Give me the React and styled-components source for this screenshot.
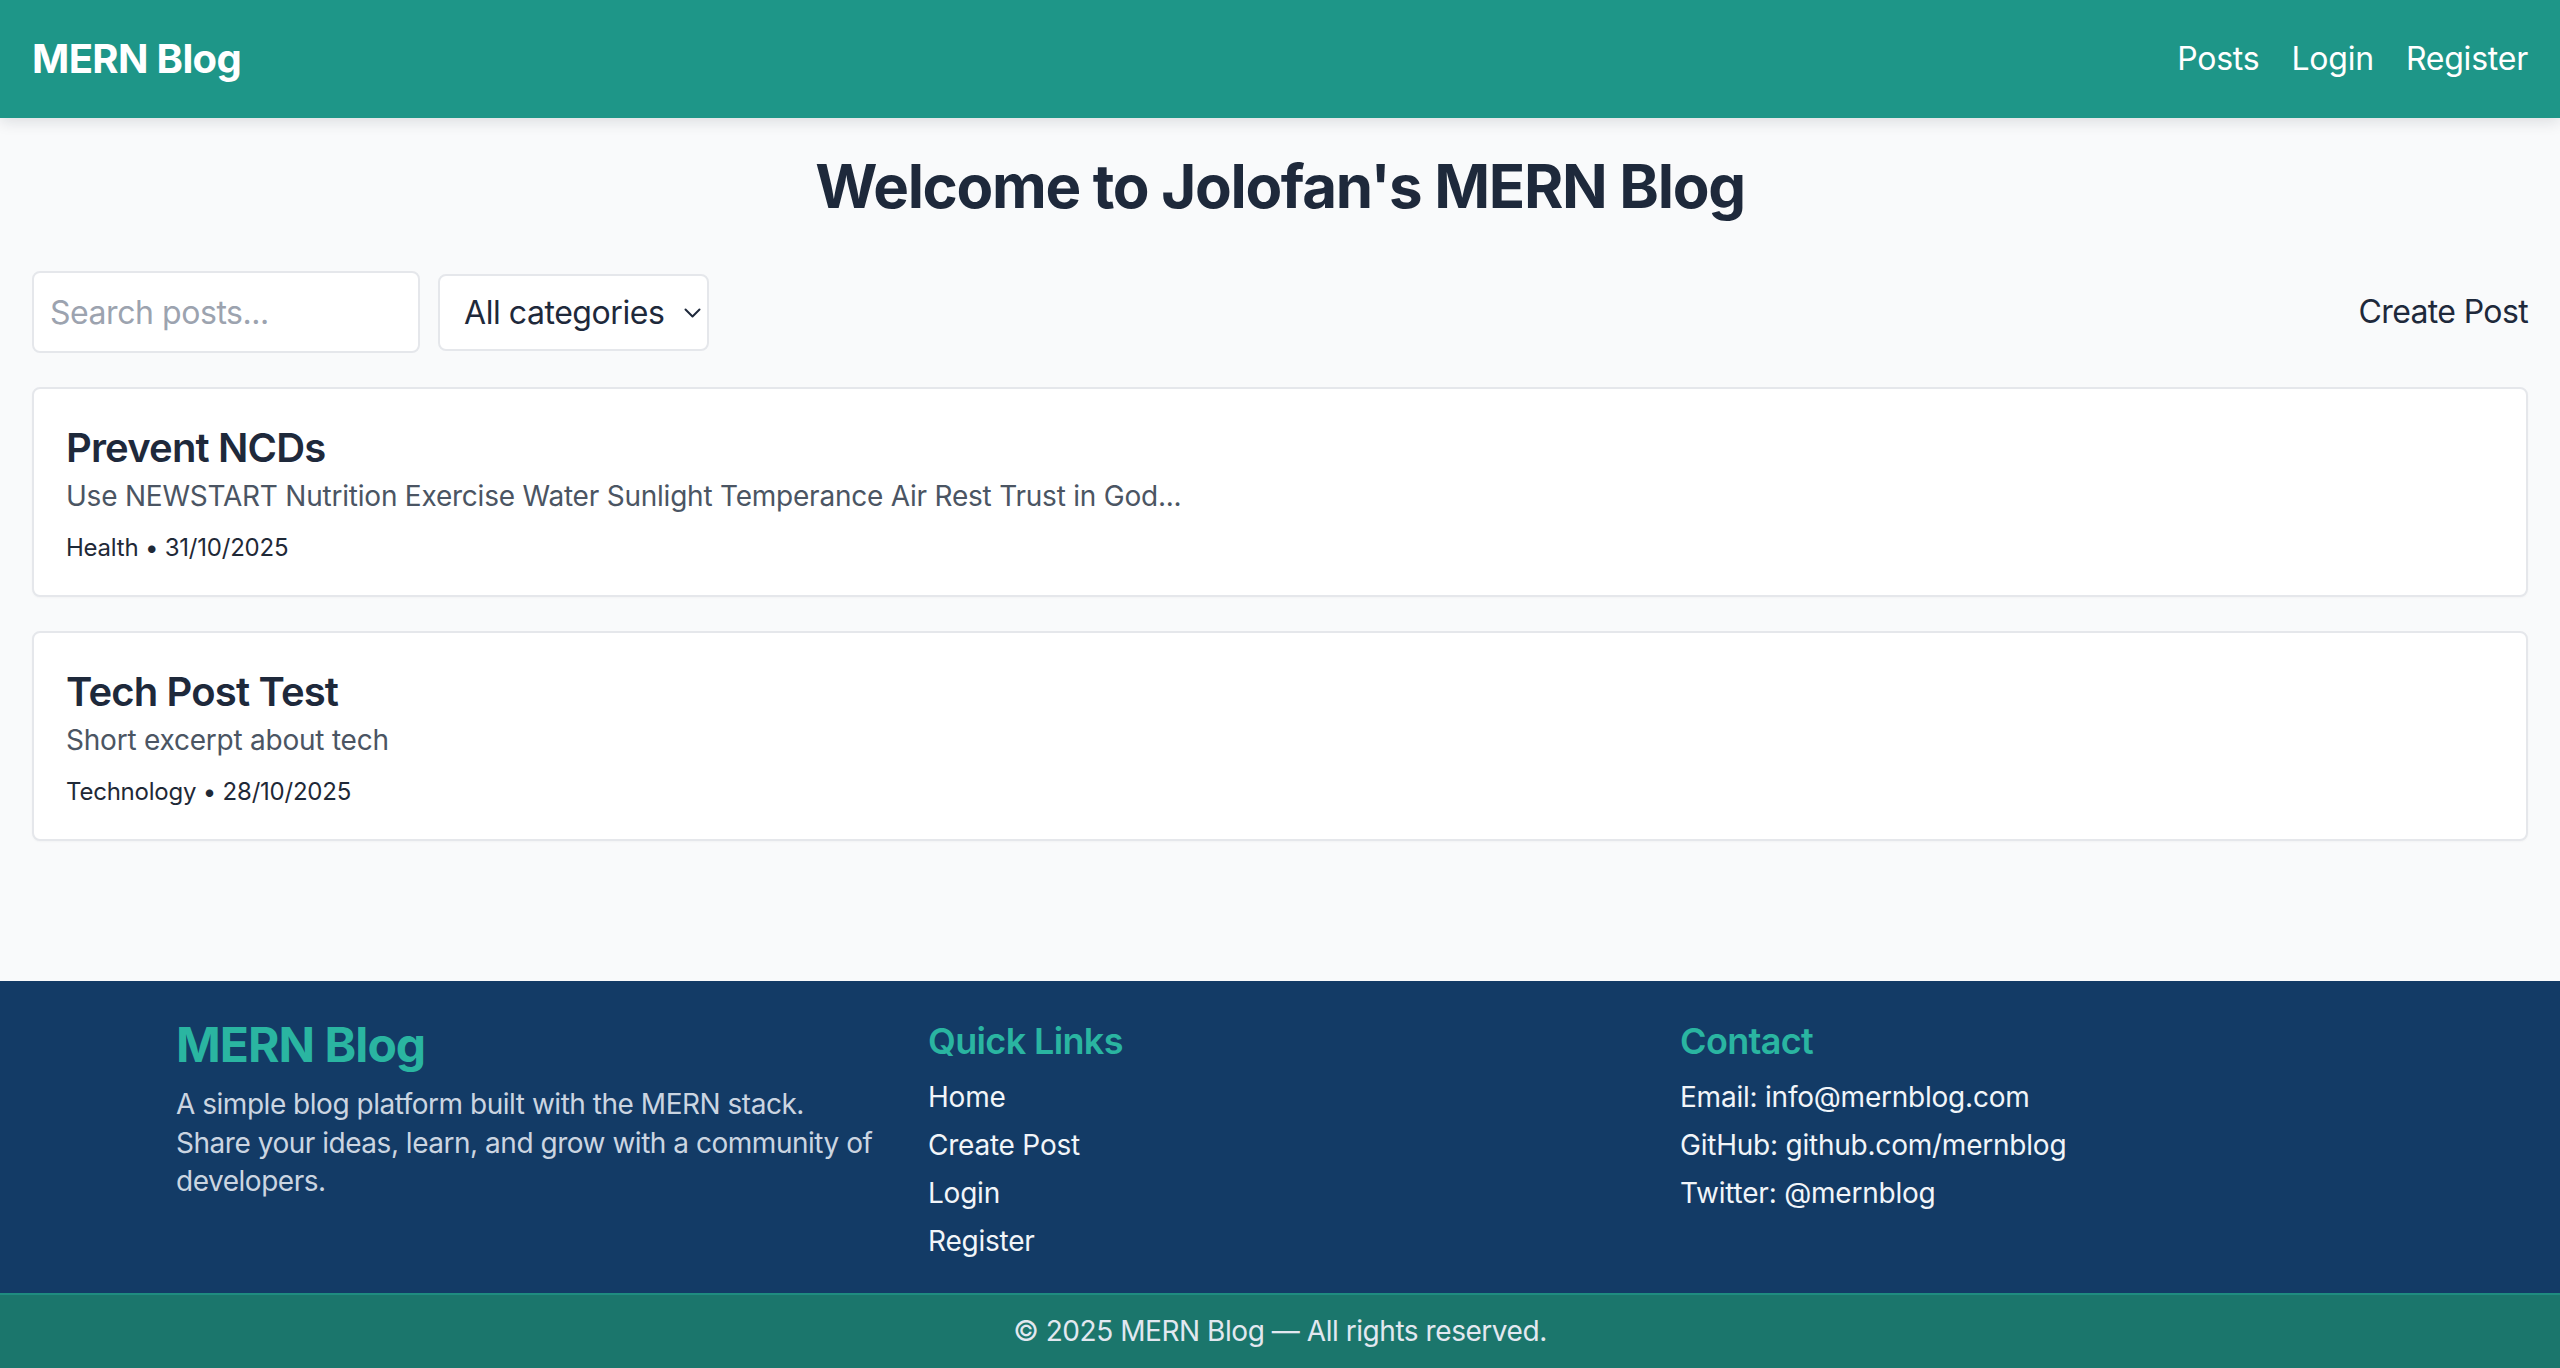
import React from "react";
import styled, { createGlobalStyle } from "styled-components";

const GlobalStyle = createGlobalStyle`
  html, body { margin: 0; padding: 0; }
  body {
    background: #f9fafb;
    font-family: Inter, "Noto Sans", "Liberation Sans", sans-serif;
    letter-spacing: -0.014em;
    -webkit-font-smoothing: antialiased;
  }
  * { box-sizing: border-box; }
  input, select { letter-spacing: -0.014em; }
`;

const Page = styled.div`
  min-height: 100vh;
  display: flex;
  flex-direction: column;
`;

const NavBar = styled.header`
  height: 118px;
  background: #1e9688;
  display: flex;
  align-items: center;
  justify-content: space-between;
  padding: 0 32px;
  box-shadow: 0 4px 14px rgba(15, 23, 42, 0.12);
  position: relative;
  z-index: 1;
`;

const Brand = styled.a`
  font-size: 40px;
  line-height: 56px;
  font-weight: 700;
  color: #ffffff;
  text-decoration: none;
  letter-spacing: -0.016em;
`;

const NavLinks = styled.nav`
  display: flex;
  align-items: center;
  gap: 32px;
`;

const NavLink = styled.a`
  font-size: 32px;
  line-height: 48px;
  color: #ffffff;
  text-decoration: none;
`;

const Main = styled.main`
  flex: 1;
  padding: 32px 32px 0;
`;

const Title = styled.h1`
  margin: 0 0 49px;
  text-align: center;
  font-size: 60px;
  line-height: 72px;
  font-weight: 700;
  color: #1e293b;
  letter-spacing: -0.022em;
`;

const Controls = styled.div`
  display: flex;
  align-items: center;
  justify-content: space-between;
  margin-bottom: 34px;
`;

const Filters = styled.div`
  display: flex;
  align-items: center;
  gap: 18px;
`;

const SearchInput = styled.input`
  width: 388px;
  height: 82px;
  border: 2px solid #e5e7eb;
  border-radius: 8px;
  background: #ffffff;
  padding: 0 16px;
  font-family: inherit;
  font-size: 32px;
  color: #1e293b;
  outline: none;
  &::placeholder { color: #9ca3af; }
`;

const SelectWrap = styled.div`
  position: relative;
  width: 271px;
  height: 77px;
`;

const Select = styled.select`
  appearance: none;
  -webkit-appearance: none;
  width: 100%;
  height: 100%;
  border: 2px solid #e5e7eb;
  border-radius: 8px;
  background: #ffffff;
  padding: 0 40px 0 24px;
  font-family: inherit;
  font-size: 32px;
  color: #1e293b;
  outline: none;
`;

const Chevron = styled.svg`
  position: absolute;
  right: 8px;
  top: 34px;
  width: 17px;
  height: 10px;
  pointer-events: none;
`;

const CreateLink = styled.a`
  font-size: 32px;
  line-height: 48px;
  color: #1e293b;
  text-decoration: none;
  letter-spacing: -0.02em;
`;

const PostList = styled.div`
  display: flex;
  flex-direction: column;
  gap: 34px;
`;

const Card = styled.article`
  background: #ffffff;
  border: 2px solid #e5e7eb;
  border-radius: 8px;
  padding: 31px 32px;
  box-shadow: 0 1px 2px rgba(15, 23, 42, 0.03);
`;

const CardTitle = styled.h2`
  margin: 0;
  font-size: 40px;
  line-height: 56px;
  font-weight: 600;
  color: #1e293b;
  letter-spacing: -0.021em;
`;

const Excerpt = styled.p`
  margin: 0;
  font-size: 28px;
  line-height: 40px;
  color: #4b5563;
`;

const Meta = styled.div`
  margin-top: 16px;
  font-size: 24px;
  line-height: 32px;
  color: #1f2937;
`;

const Footer = styled.footer`
  background: #133b66;
`;

const FooterGrid = styled.div`
  max-width: 2304px;
  margin: 0 auto;
  padding: 32px 48px;
  display: grid;
  grid-template-columns: repeat(3, 1fr);
  gap: 48px;
`;

const FooterCol = styled.div`
  display: flex;
  flex-direction: column;
`;

const FooterBrand = styled.h2`
  margin: 0 0 8px;
  font-size: 48px;
  line-height: 64px;
  font-weight: 700;
  color: #2ab5a1;
  letter-spacing: -0.02em;
`;

const FooterText = styled.p`
  margin: 0;
  font-size: 28px;
  line-height: 38.5px;
  color: #cbd5e1;
  letter-spacing: -0.017em;
`;

const FooterHeading = styled.h3`
  margin: 0 0 8px;
  font-size: 36px;
  line-height: 56px;
  font-weight: 600;
  color: #2ab5a1;
  letter-spacing: -0.018em;
`;

const FooterList = styled.ul`
  list-style: none;
  margin: 0;
  padding: 0;
  display: flex;
  flex-direction: column;
  gap: 8px;
`;

const FooterItem = styled.li`
  font-size: 28px;
  line-height: 40px;
  color: #f1f5f9;
`;

const BottomBar = styled.div`
  background: #1b766c;
  border-top: 2px solid #1f8c80;
  padding: 16px 32px 17px;
  text-align: center;
  font-size: 28px;
  line-height: 40px;
  color: #e2e8f0;
  letter-spacing: -0.016em;
`;

const posts = [
  {
    title: "Prevent NCDs",
    excerpt:
      "Use NEWSTART Nutrition Exercise Water Sunlight Temperance Air Rest Trust in God...",
    category: "Health",
    date: "31/10/2025",
  },
  {
    title: "Tech Post Test",
    excerpt: "Short excerpt about tech",
    category: "Technology",
    date: "28/10/2025",
  },
];

export default function App() {
  return (
    <>
      <GlobalStyle />
      <Page>
        <NavBar>
          <Brand href="#">MERN Blog</Brand>
          <NavLinks>
            <NavLink href="#">Posts</NavLink>
            <NavLink href="#">Login</NavLink>
            <NavLink href="#">Register</NavLink>
          </NavLinks>
        </NavBar>
        <Main>
          <Title>Welcome to Jolofan's MERN Blog</Title>
          <Controls>
            <Filters>
              <SearchInput placeholder="Search posts..." />
              <SelectWrap>
                <Select defaultValue="all">
                  <option value="all">All categories</option>
                  <option value="health">Health</option>
                  <option value="technology">Technology</option>
                </Select>
                <Chevron viewBox="0 0 17 10" fill="none">
                  <path d="M1.5 1.5 L8.5 8.5 L15.5 1.5" stroke="#1e293b" strokeWidth="2" strokeLinecap="round" strokeLinejoin="round" />
                </Chevron>
              </SelectWrap>
            </Filters>
            <CreateLink href="#">Create Post</CreateLink>
          </Controls>
          <PostList>
            {posts.map((p) => (
              <Card key={p.title}>
                <CardTitle>{p.title}</CardTitle>
                <Excerpt>{p.excerpt}</Excerpt>
                <Meta>
                  {p.category} • {p.date}
                </Meta>
              </Card>
            ))}
          </PostList>
        </Main>
        <Footer>
          <FooterGrid>
            <FooterCol>
              <FooterBrand>MERN Blog</FooterBrand>
              <FooterText>
                A simple blog platform built with the MERN stack. Share your ideas, learn, and grow with a community of developers.
              </FooterText>
            </FooterCol>
            <FooterCol>
              <FooterHeading>Quick Links</FooterHeading>
              <FooterList>
                <FooterItem>Home</FooterItem>
                <FooterItem>Create Post</FooterItem>
                <FooterItem>Login</FooterItem>
                <FooterItem>Register</FooterItem>
              </FooterList>
            </FooterCol>
            <FooterCol>
              <FooterHeading>Contact</FooterHeading>
              <FooterList>
                <FooterItem>Email: info@mernblog.com</FooterItem>
                <FooterItem>GitHub: github.com/mernblog</FooterItem>
                <FooterItem>Twitter: @mernblog</FooterItem>
              </FooterList>
            </FooterCol>
          </FooterGrid>
          <BottomBar>© 2025 MERN Blog — All rights reserved.</BottomBar>
        </Footer>
      </Page>
    </>
  );
}
